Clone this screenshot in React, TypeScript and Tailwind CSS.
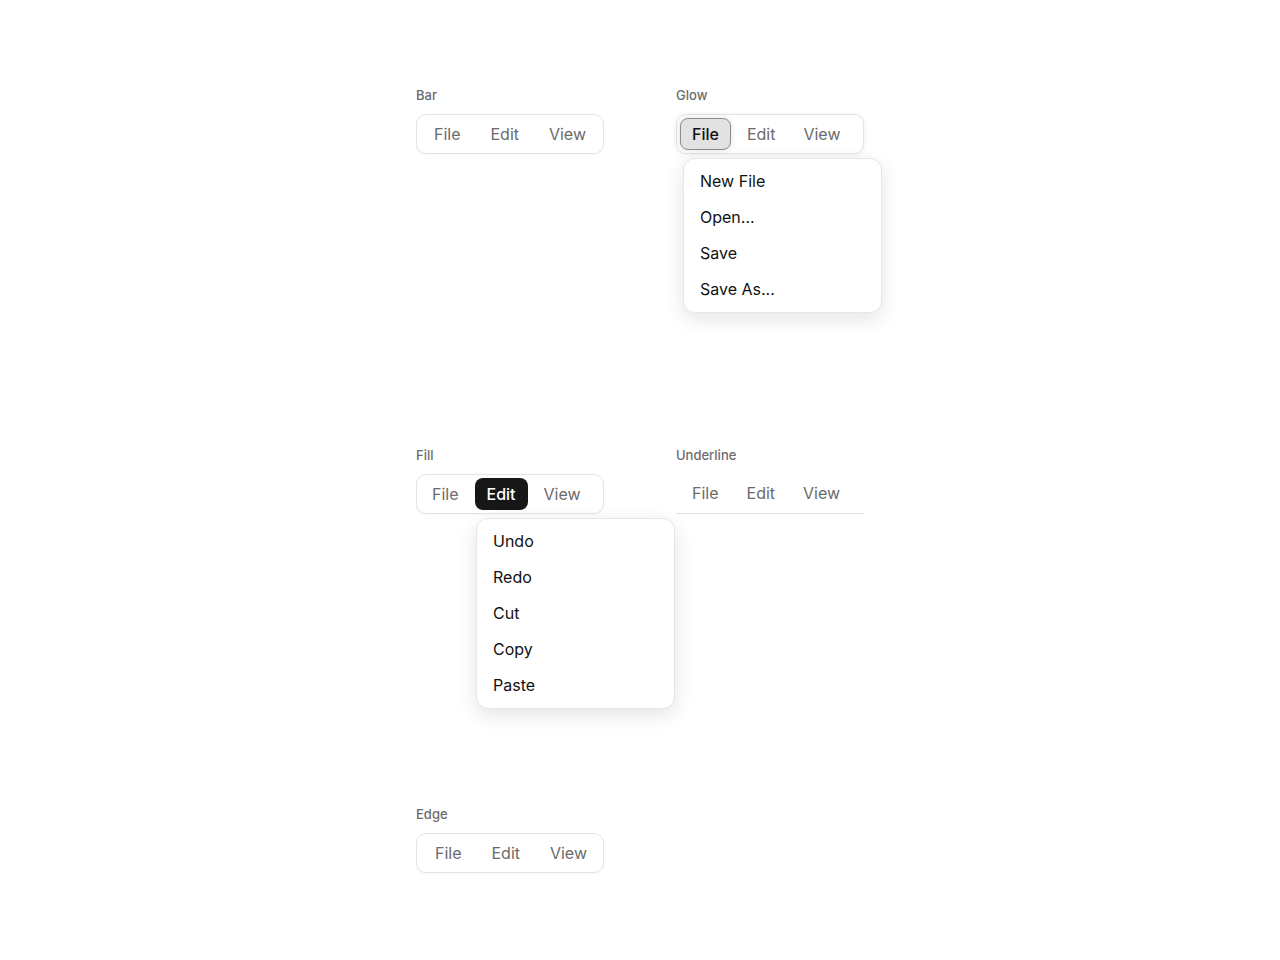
import { ReactNode } from "react";

const MENUS = ["File", "Edit", "View"] as const;

const FILE_ITEMS = ["New File", "Open...", "Save", "Save As..."];
const EDIT_ITEMS = ["Undo", "Redo", "Cut", "Copy", "Paste"];

function Label({ children }: { children: ReactNode }) {
  return <div className="text-[13px] leading-5 font-medium text-[#6b6b6b] mb-[9px]">{children}</div>;
}

function Dropdown({ items, className }: { items: string[]; className: string }) {
  return (
    <div
      className={`absolute top-full mt-1 w-[199px] rounded-xl border border-[#e6e6e6] bg-white pt-[4px] pb-[5px] px-1 shadow-[0_6px_20px_rgba(0,0,0,0.11)] z-10 ${className}`}
    >
      {items.map((it) => (
        <div key={it} className="h-9 flex items-center px-3 text-[16px] text-[#111]">
          {it}
        </div>
      ))}
    </div>
  );
}

// Plain bar: evenly spread items, no active state
function BarMenu({ edge = false }: { edge?: boolean }) {
  return (
    <div
      className={`w-[188px] h-10 flex items-center justify-between rounded-[10px] border border-[#e4e4e4] bg-white p-[3px] shadow-[0_1px_2px_rgba(0,0,0,0.04)] ${
        edge ? "pl-[4px] pr-[2px]" : ""
      }`}
    >
      {MENUS.map((m) => (
        <button key={m} type="button" className="h-8 px-3.5 text-[16px] text-[#6b6b6b]">
          {m}
        </button>
      ))}
    </div>
  );
}

function GlowMenu() {
  return (
    <div className="relative w-[188px]">
      <div className="h-10 flex items-center gap-1 rounded-[10px] border border-[#e4e4e4] bg-white p-[3px] shadow-[0_1px_6px_rgba(0,0,0,0.07)]">
        {MENUS.map((m) =>
          m === "File" ? (
            <button
              key={m}
              type="button"
              className="h-8 px-[11px] rounded-lg border border-[#8c8c8c] bg-[#e2e2e2] text-[16px] font-medium text-[#111] shadow-[0_0_6px_rgba(0,0,0,0.12)]"
            >
              {m}
            </button>
          ) : (
            <button key={m} type="button" className="h-8 px-3 text-[16px] text-[#6b6b6b]">
              {m}
            </button>
          )
        )}
      </div>
      <Dropdown items={FILE_ITEMS} className="left-[7px]" />
    </div>
  );
}

function FillMenu() {
  return (
    <div className="relative w-[188px]">
      <div className="h-10 flex items-center gap-1 rounded-[10px] border border-[#e4e4e4] bg-white p-[3px] shadow-[0_1px_2px_rgba(0,0,0,0.04)]">
        {MENUS.map((m) =>
          m === "Edit" ? (
            <button
              key={m}
              type="button"
              className="h-8 px-3 rounded-lg bg-[#171717] text-[16px] font-medium text-white"
            >
              {m}
            </button>
          ) : (
            <button key={m} type="button" className="h-8 px-3 text-[16px] text-[#6b6b6b]">
              {m}
            </button>
          )
        )}
      </div>
      <Dropdown items={EDIT_ITEMS} className="left-[60px]" />
    </div>
  );
}

function UnderlineMenu() {
  return (
    <div className="w-[188px] h-10 flex items-center border-b border-[#e2e2e2] pl-[2px] pb-[2px]">
      {MENUS.map((m) => (
        <button key={m} type="button" className="h-8 px-[14px] text-[16px] text-[#6b6b6b]">
          {m}
        </button>
      ))}
    </div>
  );
}

export default function App() {
  return (
    <div
      className="min-h-[960px] bg-white pt-[85px]"
      style={{ fontFamily: "Inter, 'Noto Sans', sans-serif" }}
    >
      <div className="mx-auto w-[448px] grid grid-cols-[188px_188px] gap-x-[72px] grid-rows-[360px_359px_auto]">
        <div>
          <Label>Bar</Label>
          <BarMenu />
        </div>
        <div>
          <Label>Glow</Label>
          <GlowMenu />
        </div>
        <div>
          <Label>Fill</Label>
          <FillMenu />
        </div>
        <div>
          <Label>Underline</Label>
          <UnderlineMenu />
        </div>
        <div>
          <Label>Edge</Label>
          <BarMenu edge />
        </div>
      </div>
    </div>
  );
}
